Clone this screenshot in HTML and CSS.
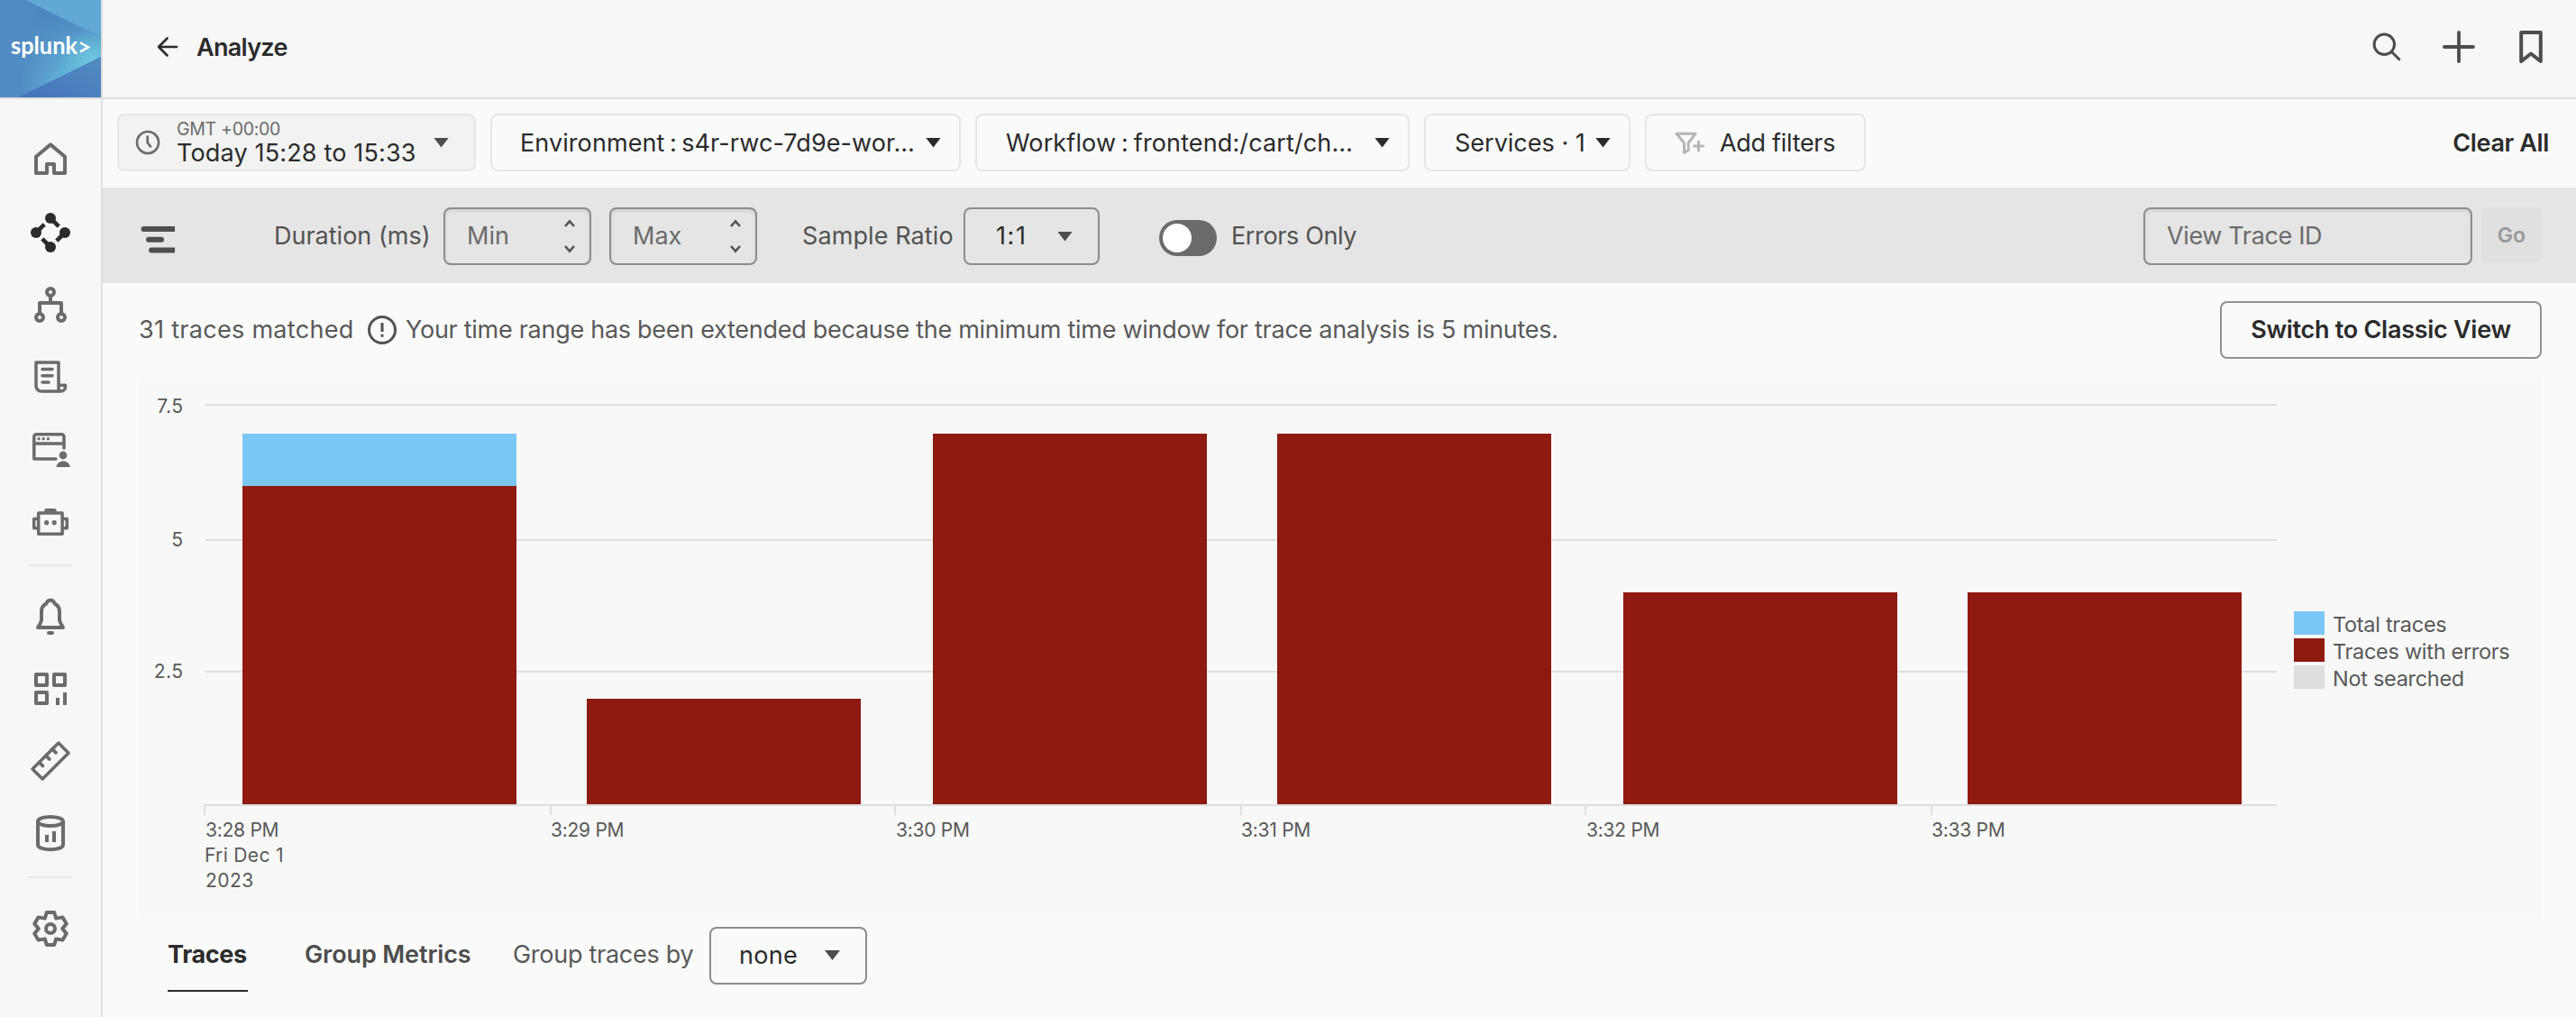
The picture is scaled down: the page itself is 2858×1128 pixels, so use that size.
FILE: index.html
```html
<!DOCTYPE html>
<html lang="en">
<head>
<meta charset="utf-8">
<title>Analyze</title>
<link rel="stylesheet" href="styles.css">
</head>
<body>
<div class="app">
  <aside class="sidebar">
    <a class="logo" href="#" aria-label="Home">
      <svg width="112" height="108" viewBox="0 0 112 108">
        <defs>
          <linearGradient id="wedge" gradientUnits="userSpaceOnUse" x1="62" y1="8" x2="80" y2="82">
            <stop offset="0" stop-color="#4a7fc0"/><stop offset=".35" stop-color="#5191c6"/><stop offset=".75" stop-color="#5ba6d0"/><stop offset="1" stop-color="#62b3d8"/>
          </linearGradient>
          <linearGradient id="side" gradientUnits="userSpaceOnUse" x1="24" y1="60" x2="70" y2="60">
            <stop offset="0" stop-color="#528bc3"/><stop offset="1" stop-color="#528bc3" stop-opacity="0"/>
          </linearGradient>
          <radialGradient id="glow" gradientUnits="userSpaceOnUse" cx="102" cy="66" r="34">
            <stop offset="0" stop-color="#6fc6e0"/><stop offset="1" stop-color="#6fc6e0" stop-opacity="0"/>
          </radialGradient>
          <linearGradient id="foot" x1="0" y1="1" x2="1" y2="0">
            <stop offset="0" stop-color="#4474ba"/><stop offset="1" stop-color="#528bc3"/>
          </linearGradient>
        </defs>
        <rect width="112" height="108" fill="#528bc3"/>
        <path d="M28 0 112 41V63L20 108V0z" fill="url(#wedge)"/>
        <path d="M28 0 112 41V63L20 108z" fill="url(#glow)"/>
        <path d="M20 0H70V108H20z" fill="url(#side)"/>
        <path d="M28 0H112V41z" fill="#61a9d5"/>
        <path d="M20 108 112 63V108z" fill="url(#foot)"/>
        <text class="logo-text" x="12" y="59.5" textLength="74" lengthAdjust="spacingAndGlyphs">splunk</text>
        <path d="M89 47.2 98 52.4 89 57.4" fill="none" stroke="#fff" stroke-width="2.4"/>
      </svg>
    </a>
    <nav class="nav">
      <a class="nav-item" href="#"><svg class="nav-icon" viewBox="0 0 80 80"><path d="M24 35.8 40 22.4 56 35.8V54H44V44H36V54H24z"/></svg></a>
      <a class="nav-item active" href="#"><svg class="nav-icon" viewBox="0 0 80 80"><path d="M40 24 49.2 33.2M24 40 33.2 30.8M56 40 46.8 49.2M40 56 30.8 46.8" stroke-width="4.6" stroke-linejoin="miter"/><g class="solid"><circle cx="40" cy="24" r="6"/><circle cx="56" cy="40" r="6"/><circle cx="40" cy="56" r="6"/><circle cx="24" cy="40" r="6"/></g></svg></a>
      <a class="nav-item" href="#"><svg class="nav-icon" viewBox="0 0 80 80"><circle cx="40" cy="26" r="4"/><circle cx="28" cy="54" r="4"/><circle cx="52" cy="54" r="4"/><path d="M40 30V38M28 50V38H52V50"/></svg></a>
      <a class="nav-item" href="#"><svg class="nav-icon thin" viewBox="0 0 80 80"><path d="M49 53V24H24V50a6 6 0 0 0 6 6H51.5a5 5 0 0 0 5-5V49.2H49V52a4 4 0 0 0 2.5 4"/><path d="M31 31.4H42M31 38.7H42M31 45.9H38" stroke-linecap="round"/></svg></a>
      <a class="nav-item" href="#"><svg class="nav-icon thin" viewBox="0 0 80 80"><path d="M46 51H21.8V26.4a2.6 2.6 0 0 1 2.6-2.6H52.4a2.6 2.6 0 0 1 2.6 2.6V39M21.8 34H55" stroke-linecap="round"/><g class="solid"><circle cx="27" cy="28.8" r="1.7"/><circle cx="32.2" cy="28.8" r="1.7"/><circle cx="37.4" cy="28.8" r="1.7"/><circle cx="54" cy="47" r="4.4"/><path d="M46.5 60c.6-4.200 3.500-6.600 7.600-6.600s7 2.400 7.700 6.600z"/></g></svg></a>
      <a class="nav-item" href="#"><svg class="nav-icon thin" viewBox="0 0 80 80"><rect x="26.700" y="31" width="26.400" height="23.300"/><path d="M26 37.500H21.700V47.700H26M54 37.500H58.300V47.700H54"/><g class="solid"><path d="M33.300 31V28.500a2.500 2.500 0 0 1 2.500-2.500H44.200a2.500 2.500 0 0 1 2.500 2.500V31z"/><circle cx="35.700" cy="41.700" r="2.600"/><circle cx="44.200" cy="41.700" r="2.600"/></g></svg></a>
    </nav>
    <hr class="nav-rule">
    <nav class="nav">
      <a class="nav-item" href="#"><svg class="nav-icon" viewBox="0 0 80 80"><path d="M40 21.800c2.800 0 4 1.600 4.800 3.800 3.200 1.600 5.200 5 5.200 8.600v9c0 3 1.500 4.200 4 8.800H26c2.500-4.600 4-5.800 4-8.800v-9c0-3.600 2-7 5.200-8.600.8-2.200 2-3.800 4.800-3.800z"/><path d="M38 58H42" stroke-linecap="round"/></svg></a>
      <a class="nav-item" href="#"><svg class="nav-icon" viewBox="0 0 80 80"><path d="M24 24H36V36H24zM44 24H56V36H44zM24 44H36V56H24zM48 50V58M56 44V58"/></svg></a>
      <a class="nav-item" href="#"><svg class="nav-icon thin" viewBox="0 0 80 80"><path d="M48.900 20 60 31.200 31.200 60 20 48.900z"/><path d="M27.500 41.500 31.400 45.400M34.900 34.100 38.800 38M42.100 26.900 46 30.800" stroke-linecap="round" stroke-width="3.800"/></svg></a>
      <a class="nav-item" href="#"><svg class="nav-icon" viewBox="0 0 80 80"><path d="M26 27V53C26 60 54 60 54 53V27"/><ellipse cx="40" cy="27" rx="14" ry="5"/><path d="M36 42V50M44 38V50"/></svg></a>
    </nav>
    <hr class="nav-rule">
    <nav class="nav">
      <a class="nav-item" href="#"><svg class="nav-icon" viewBox="0 0 80 80"><path d="M35.800 22H44.200L46.200 28.600 53.500 27.400 57.700 34.600 53.200 40 57.700 45.400 53.500 52.600 46.200 51.400 44.200 58H35.800L33.800 51.400 26.500 52.600 22.300 45.400 26.800 40 22.300 34.600 26.500 27.400 33.800 28.600z"/><circle cx="40" cy="40" r="5"/></svg></a>
    </nav>
  </aside>

  <main class="main">
    <header class="header">
      <svg class="back" width="24" height="24" viewBox="0 0 24 24"><path d="M11.500 2.500 2 12 11.500 21.500M2 12H22"/></svg>
      <h1 class="title">Analyze</h1>
      <div class="actions">
        <svg width="80" height="80" viewBox="0 0 80 80"><g stroke-width="3"><circle cx="37.300" cy="37.300" r="11.200"/><path d="M45.500 45.500 53.800 53.800" stroke-linecap="round"/></g></svg>
        <svg width="80" height="80" viewBox="0 0 80 80"><path d="M24 40H56M40 24V56" stroke-linecap="round" stroke-width="3.800"/></svg>
        <svg width="80" height="80" viewBox="0 0 80 80"><path d="M29.200 24H50.800V56L40 47.500 29.200 56z" stroke-width="4"/></svg>
      </div>
    </header>

    <section class="filters">
      <button class="chip time">
        <svg width="28" height="28" viewBox="0 0 28 28"><circle cx="14" cy="14" r="12"/><path d="M13.700 7.500V14.200L17 18.500"/></svg>
        <span class="time-text"><span class="zone">GMT +00:00</span><span class="range">Today 15:28 to 15:33</span></span>
        <i class="caret soft"></i>
      </button>
      <button class="chip env"><span>Environment : s4r-rwc-7d9e-wor…</span><i class="caret"></i></button>
      <button class="chip workflow"><span>Workflow : frontend:/cart/ch…</span><i class="caret"></i></button>
      <button class="chip services"><span>Services · 1</span><i class="caret"></i></button>
      <button class="chip add">
        <svg width="34" height="26" viewBox="0 0 34 26"><path d="M2 2.300H23L15.200 12.500V20.500L10.500 23.300V12.500z"/><path d="M21.500 16H31.500M26.500 11V21"/></svg>
        <span>Add filters</span>
      </button>
      <button class="clear">Clear All</button>
    </section>

    <section class="toolbar">
      <svg class="waterfall" width="38" height="32" viewBox="0 0 38 32"><path d="M38 1H3.500a3 3 0 0 0 0 6H38zM9 12.700H23a3 3 0 0 1 0 6H9a3 3 0 0 1 0-6zM38 24.500H12a3 3 0 0 0 0 6H38z"/></svg>
      <span class="label duration">Duration (ms)</span>
      <div class="field number"><span>Min</span><svg width="16" height="40" viewBox="0 0 16 40"><path d="M3 9 8 3.500 13 9M3 31 8 36.500 13 31"/></svg></div>
      <div class="field number max"><span>Max</span><svg width="16" height="40" viewBox="0 0 16 40"><path d="M3 9 8 3.500 13 9M3 31 8 36.500 13 31"/></svg></div>
      <span class="label sample">Sample Ratio</span>
      <button class="select ratio"><span>1:1</span><i class="caret soft"></i></button>
      <span class="toggle"><i class="knob"></i></span>
      <span class="label errors">Errors Only</span>
      <div class="field trace-id">View Trace ID</div>
      <button class="go">Go</button>
    </section>

    <section class="status">
      <span class="matched">31 traces matched</span>
      <svg class="alert" width="32" height="32" viewBox="0 0 32 32"><circle cx="16" cy="16" r="14.500"/><path d="M16 8V18M16 20.700V23.700"/></svg>
      <span class="notice">Your time range has been extended because the minimum time window for trace analysis is 5 minutes.</span>
      <button class="classic">Switch to Classic View</button>
    </section>

    <section class="chart">
      <svg class="plot" width="2391" height="599" viewBox="154 419 2391 599">
        <g class="rules">
          <path d="M228 449H2526M228 599H2526M228 745H2526"/>
          <path d="M226 893H2526M227 892V904M611 892V904M993 892V904M1377 892V904M1759 892V904M2143 892V904"/>
        </g>
        <rect class="total" x="269" y="481" width="304" height="58"/>
        <g class="error">
          <rect x="269" y="539" width="304" height="353"/>
          <rect x="651" y="775" width="304" height="117"/>
          <rect x="1035" y="481" width="304" height="411"/>
          <rect x="1417" y="481" width="304" height="411"/>
          <rect x="1801" y="657" width="304" height="235"/>
          <rect x="2183" y="657" width="304" height="235"/>
        </g>
        <g class="y-axis">
          <text x="203.500" y="458">7.5</text>
          <text x="203.500" y="606">5</text>
          <text x="203.500" y="752">2.5</text>
        </g>
        <g class="x-axis">
          <text x="228" y="928">3:28 PM</text>
          <text class="date" x="227" y="956">Fri Dec 1</text>
          <text class="year" x="228" y="984">2023</text>
          <text x="611" y="928">3:29 PM</text>
          <text x="994" y="928">3:30 PM</text>
          <text x="1377" y="928">3:31 PM</text>
          <text x="1760" y="928">3:32 PM</text>
          <text x="2143" y="928">3:33 PM</text>
        </g>
      </svg>
      <ul class="legend">
        <li><i class="swatch blue"></i><span>Total traces</span></li>
        <li><i class="swatch red"></i><span>Traces with errors</span></li>
        <li><i class="swatch grey"></i><span>Not searched</span></li>
      </ul>
    </section>

    <section class="tabs">
      <a class="tab current" href="#">Traces</a>
      <a class="tab metrics" href="#">Group Metrics</a>
      <span class="group-label">Group traces by</span>
      <button class="select group"><span>none</span><i class="caret soft"></i></button>
    </section>
  </main>
</div>
</body>
</html>
```
FILE: styles.css
```css
* { box-sizing: border-box; }
body { margin: 0; background: #fafafa; color: #2b2b2b; font: 27px/32px Inter, "Liberation Sans", sans-serif; white-space: nowrap; }
button { margin: 0; padding: 0; border: 0; background: none; font: inherit; color: inherit; text-align: left; }
a { color: inherit; text-decoration: none; }
svg { display: block; flex: none; }
i { display: block; flex: none; }

.app { display: flex; width: 2858px; height: 1128px; overflow: hidden; }

/* Sidebar */
.sidebar { flex: none; width: 114px; border-right: 2px solid #dedede; background: #f7f7f7; }
.logo { display: block; height: 110px; margin-bottom: 28px; border-bottom: 2px solid #dedede; }
.logo-text { font: 700 27px Lato, "Open Sans", sans-serif; fill: #fff; }
.nav { display: flex; flex-direction: column; align-items: center; }
.nav-item { color: #6b6b6b; }
.nav-item.active { color: #2b2b2b; }
.nav-icon { width: 80px; height: 80px; fill: none; stroke: currentColor; stroke-width: 4; stroke-linejoin: round; }
.nav-icon.thin { stroke-width: 3.5; }
.solid { fill: currentColor; stroke: none; }
.nav-rule { width: 48px; height: 2px; margin: 8px auto 16px; border: 0; background: #e5e5e5; }

/* Header */
.main { flex: 1; min-width: 0; }
.header { display: flex; align-items: center; height: 110px; padding: 0 10px 4px 60px; border-bottom: 2px solid #dedede; background: #f7f7f7; }
.back { fill: none; stroke: #2b2b2b; stroke-width: 2.6; stroke-linecap: round; stroke-linejoin: round; }
.title { margin: 1px 0 0 20px; font-size: 27px; font-weight: 600; letter-spacing: -.7px; }
.actions { display: flex; margin-left: auto; fill: none; stroke: #4d4d4d; stroke-linejoin: round; }

/* Filter chips */
.filters { display: flex; align-items: center; gap: 16px; height: 98px; padding: 0 30px 2px 16px; }
.chip { display: flex; align-items: center; height: 64px; border: 2px solid #e6e6e6; border-radius: 8px; }
.chip > span:not(.time-text) { padding-top: 2px; }
.caret { width: 17px; height: 11px; margin-left: auto; background: #2b2b2b; clip-path: polygon(0 0, 100% 0, 50% 100%); }
.caret.soft { background: #4d4d4d; }
.time { width: 398px; padding: 0 28px 0 18px; background: #f2f2f2; }
.time svg { fill: none; stroke: #6b6b6b; stroke-width: 2.6; stroke-linecap: round; }
.time-text { display: flex; flex-direction: column; margin-left: 18px; padding-bottom: 1px; }
.zone { font-size: 19.500px; line-height: 24px; letter-spacing: -.3px; color: #6b6b6b; }
.range { line-height: 30px; letter-spacing: .16px; }
.env { width: 522px; padding: 0 20px 0 31px; letter-spacing: .08px; word-spacing: -2.200px; }
.workflow { width: 482px; padding: 0 20px 0 32px; letter-spacing: .12px; word-spacing: -1.800px; }
.services { width: 229px; padding: 0 20px 0 32px; }
.add { width: 245px; padding: 0 0 0 31px; letter-spacing: -.3px; }
.add svg { margin: 2px 16px 0 0; fill: none; stroke: #b5b5b5; stroke-width: 3; stroke-linejoin: round; stroke-linecap: round; }
.clear { margin-left: auto; padding-top: 2px; font-weight: 600; letter-spacing: -.37px; }

/* Search toolbar */
.toolbar { display: flex; align-items: center; height: 106px; padding: 2px 38px 0 42px; background: #e5e5e5; }
.waterfall { margin-top: 8px; fill: #4f4f4f; }
.label { color: #525252; }
.duration { width: 188px; margin-left: 110px; }
.field { display: flex; align-items: center; height: 64px; border: 2px solid #8c8c8c; border-radius: 8px; box-shadow: inset 0 2px 4px rgba(0, 0, 0, .1); color: #6b6b6b; }
.number { width: 164px; padding: 0 14px 0 24px; }
.number svg { margin-left: auto; fill: none; stroke: #525252; stroke-width: 2.6; }
.max { margin-left: 20px; }
.sample { width: 179px; margin-left: 50px; letter-spacing: .1px; }
.select { display: flex; align-items: center; height: 64px; border: 2px solid #8c8c8c; border-radius: 8px; }
.ratio { width: 151px; padding: 0 28px 0 34px; letter-spacing: 1.600px; }
.toggle { display: flex; align-items: center; width: 64px; height: 40px; margin: 4px 0 0 66px; padding: 0 4px; border-radius: 20px; background: #6b6b6b; }
.knob { width: 32px; height: 32px; border-radius: 50%; background: #fff; }
.errors { margin-left: 16px; letter-spacing: -.37px; }
.trace-id { width: 365px; margin-left: auto; padding-left: 24px; letter-spacing: -.36px; }
.go { width: 67px; height: 62px; margin: 0 0 2px 10px; border-radius: 8px; background: #e0e0e0; color: #999; font-size: 23px; font-weight: 600; text-align: center; letter-spacing: .2px; }

/* Match summary */
.status { display: flex; align-items: center; height: 105px; padding: 0 38px 1px 40px; color: #595959; }
.matched { width: 254px; letter-spacing: .3px; }
.alert { margin-right: 10px; fill: none; stroke: #525252; stroke-width: 3; }
.notice { letter-spacing: -.28px; }
.classic { width: 357px; height: 64px; margin-left: auto; border: 2px solid #919191; border-radius: 8px; color: #2b2b2b; font-weight: 600; letter-spacing: -.28px; text-align: center; }

/* Chart */
.chart { display: flex; align-items: center; height: 599px; margin: 0 38px 0 40px; background: #f8f8f8; }
.rules { fill: none; stroke: #dedede; stroke-width: 2; }
.total { fill: #7bc7f4; }
.error { fill: #8e1a10; }
.y-axis, .x-axis { font-size: 21px; fill: #595959; }
.y-axis { text-anchor: end; letter-spacing: .5px; }
.x-axis { letter-spacing: -.26px; }
.date { letter-spacing: .34px; }
.year { letter-spacing: .5px; }
.legend { display: flex; flex-direction: column; gap: 4px; margin: 4px 0 0; padding: 0; list-style: none; color: #595959; font-size: 23.500px; letter-spacing: -.3px; }
.legend li { display: flex; gap: 9px; height: 26px; line-height: 29px; }
.swatch { width: 34px; height: 26px; }
.blue { background: #7bc7f4; }
.red { background: #8e1a10; }
.grey { background: #dedede; }

/* Result tabs */
.tabs { display: flex; height: 110px; padding: 10px 0 0 72px; line-height: 62px; }
.tab { height: 72px; color: #4d4d4d; font-weight: 600; letter-spacing: -.11px; }
.tab.current { width: 89px; border-bottom: 2px solid #2b2b2b; color: #2b2b2b; font-weight: 700; letter-spacing: -.35px; }
.metrics { width: 231px; margin-left: 63px; }
.group-label { width: 218px; color: #595959; letter-spacing: -.27px; }
.group { width: 175px; padding: 0 28px 0 31px; letter-spacing: .3px; }
.group .caret { margin-top: -1px; }
```
